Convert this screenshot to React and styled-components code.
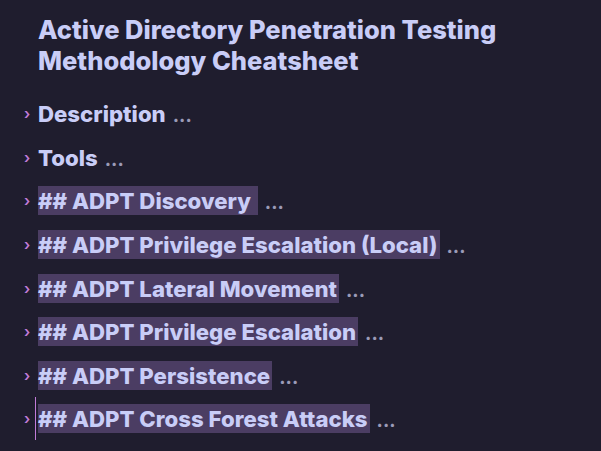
import React from "react";
import styled, { createGlobalStyle } from "styled-components";

const Global = createGlobalStyle`
  html, body { margin: 0; padding: 0; background: #1f1d2e; }
  body { font-family: Inter, "Noto Sans", sans-serif; }
`;

const Page = styled.div`
  width: 601px;
  height: 451px;
  background: #1f1d2e;
  padding: 14px 0 0 0;
  box-sizing: border-box;
  overflow: hidden;
`;

const Title = styled.h1`
  margin: 0 0 0 38px;
  font-size: 25.5px;
  line-height: 31px;
  font-weight: 800;
  color: #c9cdf7;
  letter-spacing: 0;
`;

const List = styled.div`
  display: flex;
  flex-direction: column;
  margin-top: 16px;
`;

const Row = styled.div`
  display: flex;
  align-items: center;
  height: 43.6px;
  padding-left: 24px;
`;

const Chevron = styled.span`
  width: 14px;
  color: #c17bd8;
  font-size: 15px;
  font-weight: 600;
  line-height: 1;
`;

const Text = styled.span`
  font-size: 22.2px;
  font-weight: 800;
  color: #c9cdf7;
  line-height: 29px;
  padding-right: ${(p) => (p.$hl ? "2px" : "0")};
  background: ${(p) => (p.$hl ? "#4b3d63" : "transparent")};
  white-space: pre;
`;

const Caret = styled.span`
  width: 1px;
  height: 43px;
  background: #c17bd8;
  margin-left: -3px;
  margin-right: 2px;
`;

const Dots = styled.span`
  margin-left: 7px;
  color: #9b9bb8;
  font-size: 19px;
  font-weight: 700;
  position: relative;
  top: 2px;
`;

const rows = [
  { t: "Description", hl: false },
  { t: "Tools", hl: false },
  { t: "## ADPT Discovery ", hl: true },
  { t: "## ADPT Privilege Escalation (Local)", hl: true },
  { t: "## ADPT Lateral Movement", hl: true },
  { t: "## ADPT Privilege Escalation", hl: true },
  { t: "## ADPT Persistence", hl: true },
  { t: "## ADPT Cross Forest Attacks", hl: true, caret: true },
];

export default function App() {
  return (
    <>
      <Global />
      <Page>
        <Title>
          Active Directory Penetration Testing
          <br />
          Methodology Cheatsheet
        </Title>
        <List>
          {rows.map((r) => (
            <Row key={r.t}>
              <Chevron>›</Chevron>
              {r.caret && <Caret />}
              <Text $hl={r.hl}>{r.t}</Text>
              <Dots>...</Dots>
            </Row>
          ))}
        </List>
      </Page>
    </>
  );
}
